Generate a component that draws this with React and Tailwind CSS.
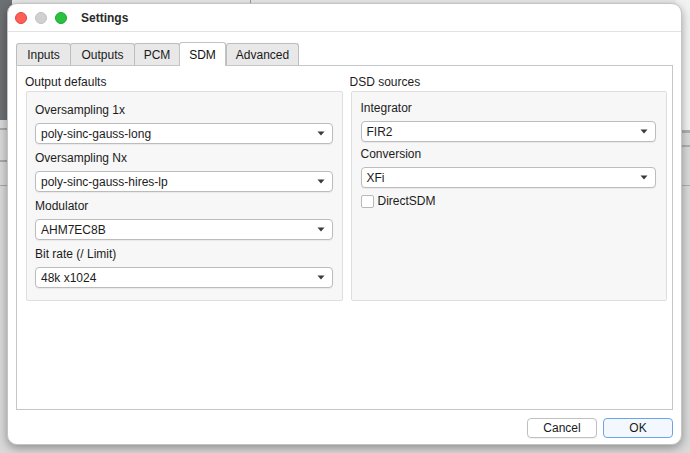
import React from "react";

const font = { fontFamily: '"Liberation Sans", Arial, sans-serif' };

const Caret = () => (
  <svg width="8" height="5" viewBox="0 0 8 5" className="shrink-0">
    <path d="M0.5 0.5 L7.5 0.5 L4 4.5 Z" fill="#3a3a3a" />
  </svg>
);

const Combo = ({ value }) => (
  <div className="h-[21px] flex items-center justify-between pl-[5px] pr-[7px] bg-white border border-[#bcbcbc] rounded-[4px] shadow-[0_1px_1px_rgba(0,0,0,0.06)] text-[12px] text-[#1c1c1c]">
    <span>{value}</span>
    <Caret />
  </div>
);

const Field = ({ label, value }) => (
  <div className="flex flex-col">
    <div className="h-[16px] leading-[16px] text-[12px] text-[#1c1c1c] mb-[5px]">{label}</div>
    <Combo value={value} />
  </div>
);

const tabs = ["Inputs", "Outputs", "PCM", "SDM", "Advanced"];
const tabWidths = { Inputs: "w-[55px]", Outputs: "w-[65px]", PCM: "w-[46px]", SDM: "w-[47px]", Advanced: "w-[73px]" };

export default function App() {
  return (
    <div className="relative w-[690px] h-[453px] overflow-hidden bg-[#d9d9d9]" style={font}>
      {/* background app peeking out */}
      <div className="absolute left-0 top-0 w-[690px] h-[4px] bg-[#e9e9e9]" />
      <div className="absolute left-0 top-0 w-[12px] h-[120px] bg-[#6d7072]" />
      <div className="absolute left-0 top-[128px] w-[12px] h-[2px] bg-[#a8a8a8]" />
      <div className="absolute left-0 top-[160px] w-[12px] h-[2px] bg-[#a8a8a8]" />
      <div className="absolute left-0 top-[185px] w-[12px] h-[1px] bg-[#a8a8a8]" />
      <div className="absolute right-0 top-0 w-[14px] h-[130px] bg-[#f2f2f2]" />
      <div className="absolute right-0 top-[130px] w-[14px] h-[3px] bg-[#b0b0b0]" />
      <div className="absolute right-0 top-[145px] w-[14px] h-[2px] bg-[#b0b0b0]" />
      <div className="absolute right-0 top-[185px] w-[14px] h-[1px] bg-[#b0b0b0]" />
      <div className="absolute left-[250px] top-0 w-[1px] h-[4px] bg-[#9a9a9a]" />

      {/* window */}
      <div className="absolute left-[7px] top-[3px] w-[675px] h-[442px] bg-white rounded-[10px] border border-[#c4c4c4] shadow-[0_3px_10px_rgba(0,0,0,0.35)] flex flex-col overflow-hidden">
        {/* title bar */}
        <div className="h-[28px] shrink-0 flex items-center border-b border-[#e2e2e2] pl-[7px]">
          <div className="flex items-center gap-[8px]">
            <span className="w-[12px] h-[12px] rounded-full bg-[#fe5f57] border border-[#e14640]" />
            <span className="w-[12px] h-[12px] rounded-full bg-[#d0d0d0] border border-[#c2c2c2]" />
            <span className="w-[12px] h-[12px] rounded-full bg-[#29c23f] border border-[#1fa630]" />
          </div>
          <span className="ml-[14px] text-[12px] font-bold text-[#2a2a2a]">Settings</span>
        </div>

        <div className="flex-1 flex flex-col pt-[10px] px-[8px] pb-[8px]">
          {/* tabs */}
          <div className="h-[23px] flex items-end">
            {tabs.map((t) =>
              t === "SDM" ? (
                <div
                  key={t}
                  className={`${tabWidths[t]} h-[24px] -mb-px relative z-10 flex items-center justify-center bg-white border border-b-0 border-[#c2c2c2] rounded-t-[3px] text-[12px] text-[#111]`}
                >
                  {t}
                </div>
              ) : (
                <div
                  key={t}
                  className={`${tabWidths[t]} h-[22px] flex items-center justify-center bg-[#e8e8e8] border border-b-0 border-[#bdbdbd] rounded-t-[3px] text-[12px] text-[#1a1a1a] -mr-px`}
                >
                  {t}
                </div>
              )
            )}
          </div>

          {/* pane */}
          <div className="h-[345px] border border-[#c6c6c6] bg-white pl-[8px] pr-[5px] pt-[8px]">
            <div className="grid grid-cols-2 gap-[7px]">
              <div className="flex flex-col">
                <div className="h-[16px] leading-[16px] text-[12px] text-[#1c1c1c] mb-[1px]">Output defaults</div>
                <div className="h-[210px] ml-px bg-[#f7f7f7] border border-[#dedede] rounded-[2px] pt-[10px] pl-[8px] pr-[9px] flex flex-col gap-[6px]">
                  <Field label="Oversampling 1x" value="poly-sinc-gauss-long" />
                  <Field label="Oversampling Nx" value="poly-sinc-gauss-hires-lp" />
                  <Field label="Modulator" value="AHM7EC8B" />
                  <Field label="Bit rate (/ Limit)" value="48k x1024" />
                </div>
              </div>
              <div className="flex flex-col">
                <div className="h-[16px] leading-[16px] text-[12px] text-[#1c1c1c] mb-[1px]">DSD sources</div>
                <div className="h-[210px] ml-px bg-[#f7f7f7] border border-[#dedede] rounded-[2px] pt-[8px] pl-[9px] pr-[10px] flex flex-col gap-[4px]">
                  <Field label="Integrator" value="FIR2" />
                  <Field label="Conversion" value="XFi" />
                  <div className="h-[13px] flex items-center mt-[3px]">
                    <span className="w-[13px] h-[13px] bg-white border border-[#b8b8b8] rounded-[2px]" />
                    <span className="ml-[4px] text-[12px] leading-[13px] text-[#1c1c1c]">DirectSDM</span>
                  </div>
                </div>
              </div>
            </div>
          </div>

          {/* buttons */}
          <div className="mt-[8px] flex justify-end gap-[6px]">
            <div className="w-[70px] h-[20px] flex items-center justify-center bg-white border border-[#c0c0c0] rounded-[4px] shadow-[0_1px_1px_rgba(0,0,0,0.06)] text-[12px] text-[#1a1a1a]">
              Cancel
            </div>
            <div className="w-[70px] h-[20px] flex items-center justify-center bg-[#f3f8fe] border border-[#6ea4e6] rounded-[4px] text-[12px] text-[#1a1a1a]">
              OK
            </div>
          </div>
        </div>
      </div>
    </div>
  );
}
